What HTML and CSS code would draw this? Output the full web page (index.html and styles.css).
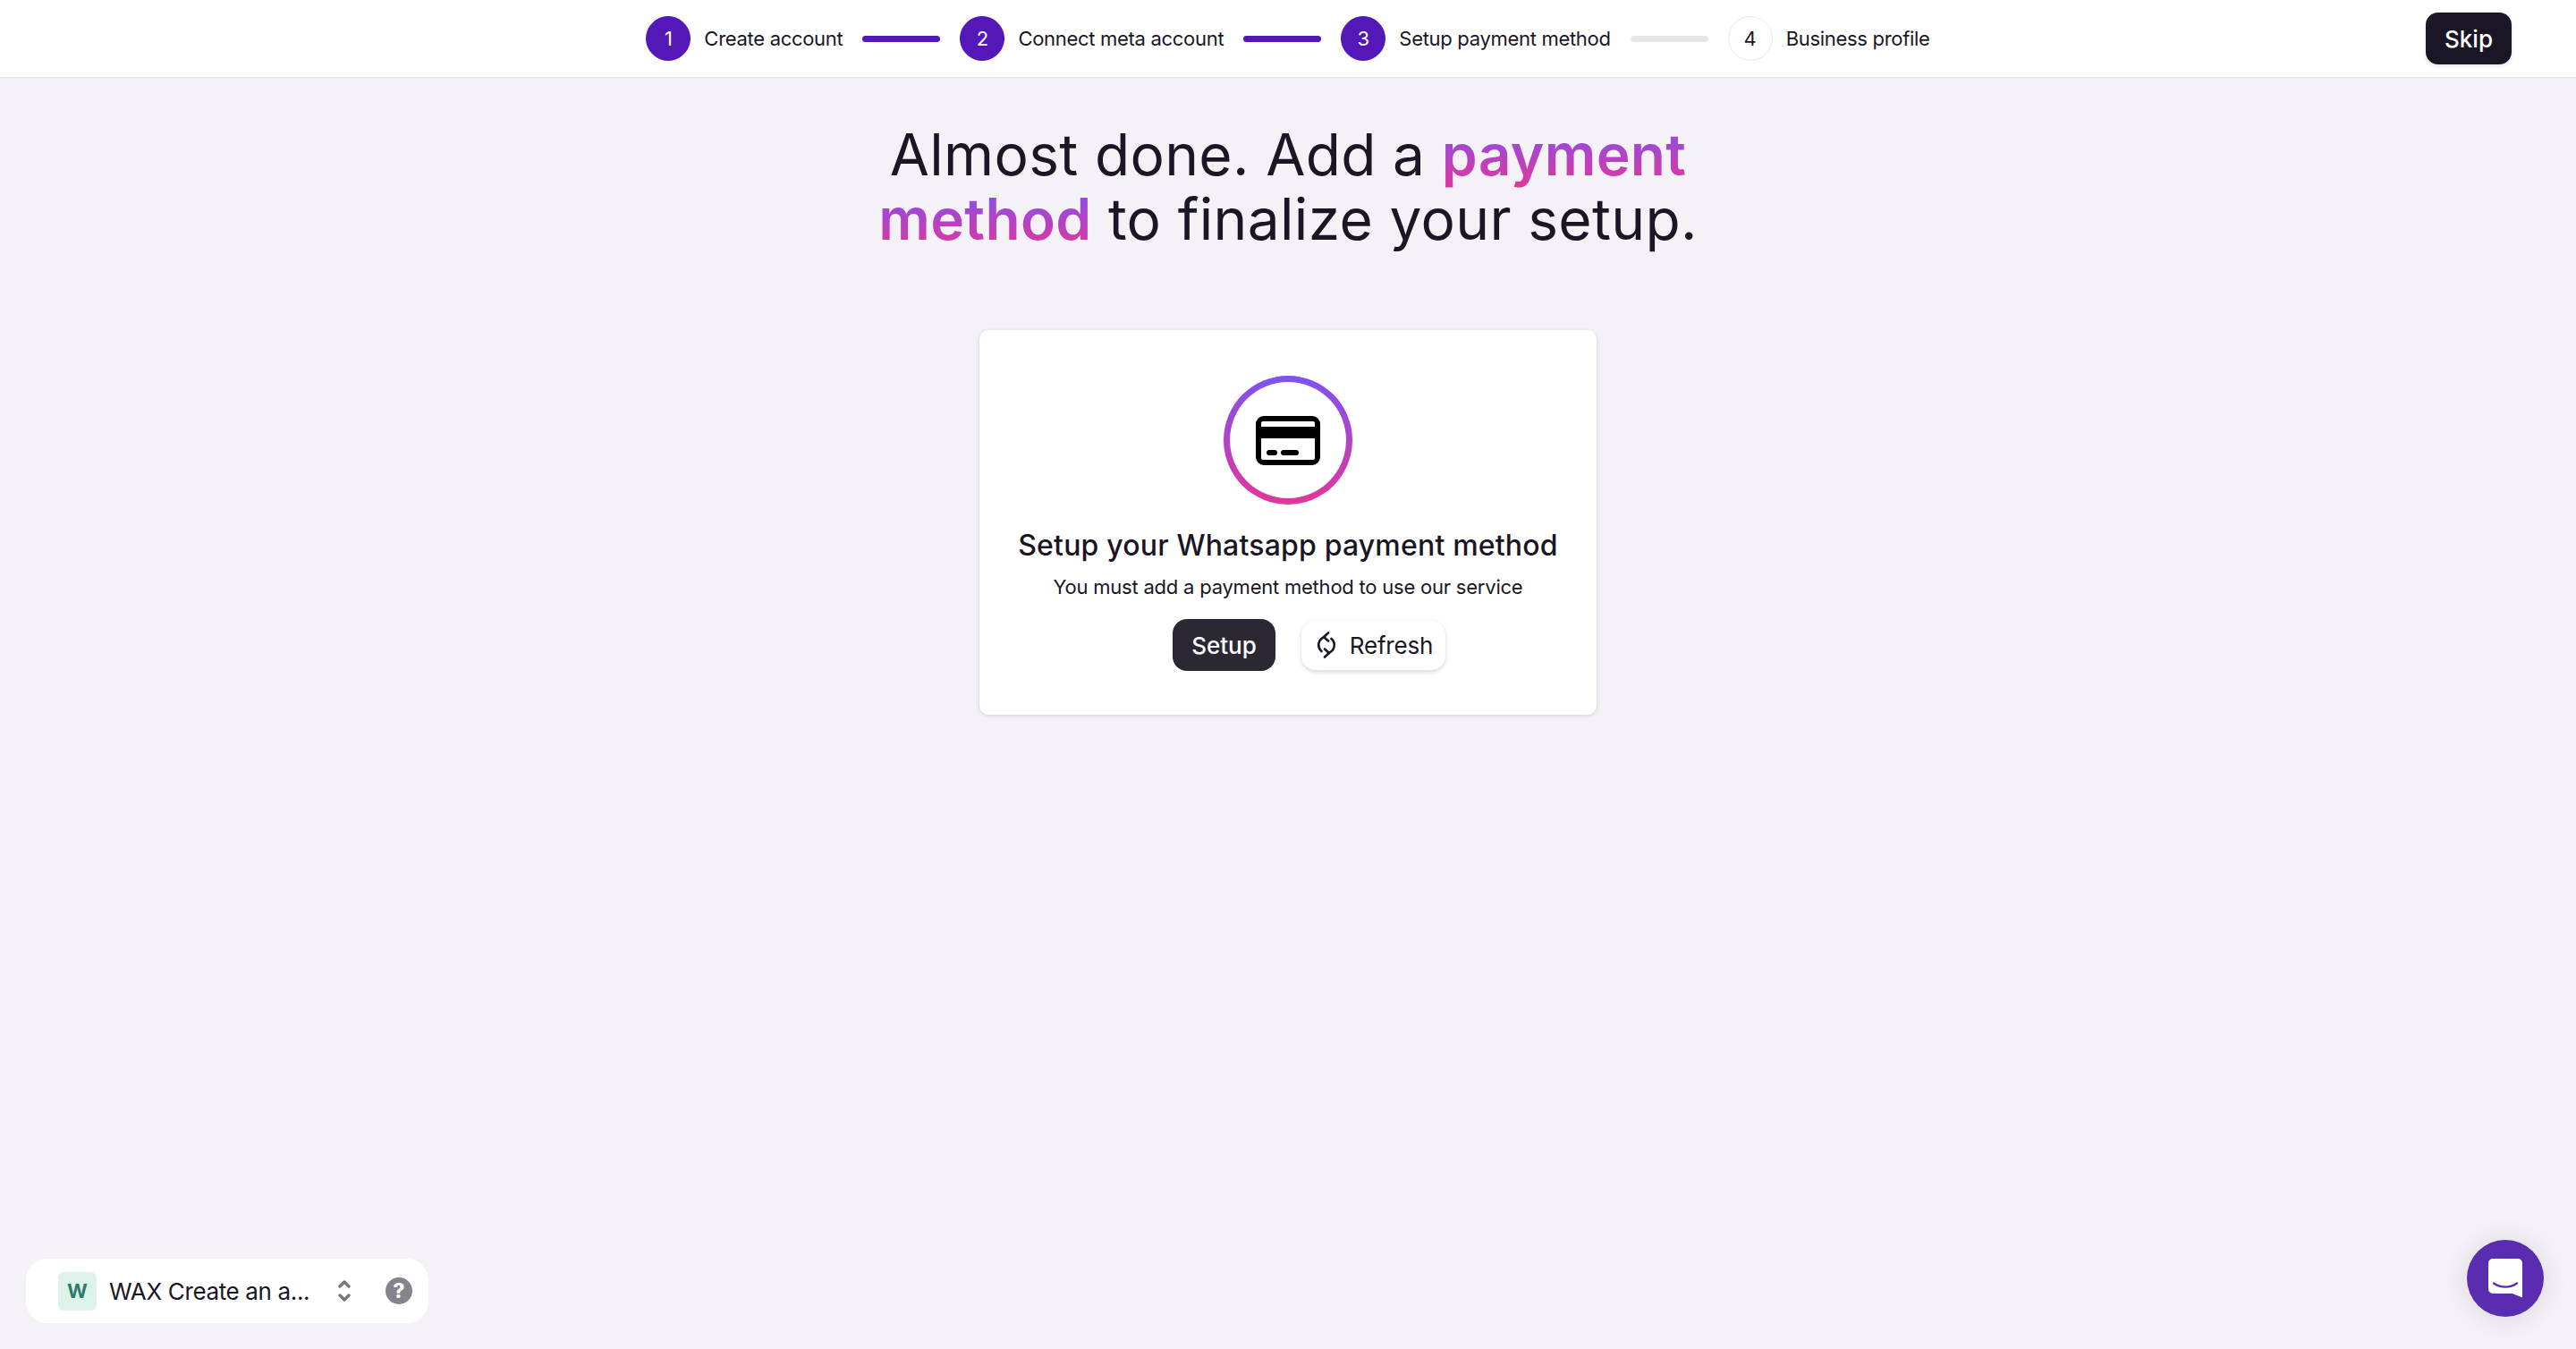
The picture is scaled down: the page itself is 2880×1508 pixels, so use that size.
FILE: index.html
```html
<!DOCTYPE html>
<html lang="en">
<head>
<meta charset="utf-8">
<title>Setup payment method</title>
<link rel="stylesheet" href="styles.css">
</head>
<body>
<header class="topbar">
  <div></div>
  <ol class="steps">
    <li class="step"><span class="dot dot-done">1</span><span class="step-label">Create account</span></li>
    <li class="bar bar-done"></li>
    <li class="step"><span class="dot dot-done">2</span><span class="step-label">Connect meta account</span></li>
    <li class="bar bar-done"></li>
    <li class="step"><span class="dot dot-done">3</span><span class="step-label">Setup payment method</span></li>
    <li class="bar"></li>
    <li class="step"><span class="dot">4</span><span class="step-label">Business profile</span></li>
  </ol>
  <div class="topbar-end"><button class="skip">Skip</button></div>
</header>
<main class="main">
  <h1 class="headline">Almost done. Add a <span class="grad">payment method</span> to finalize your setup.</h1>
  <section class="card">
    <div class="ring">
      <svg class="card-icon" width="72" height="55" viewBox="0 0 72 55" aria-hidden="true">
        <path fill-rule="evenodd" d="M9 0H63a9 9 0 0 1 9 9V46a9 9 0 0 1-9 9H9a9 9 0 0 1-9-9V9a9 9 0 0 1 9-9ZM8 6a2 2 0 0 0-2 2V12H66V8a2 2 0 0 0-2-2ZM6 25V47a2 2 0 0 0 2 2H64a2 2 0 0 0 2-2V25Z"/>
        <rect x="12" y="38" width="12" height="6" rx="3"/>
        <rect x="28" y="38" width="20" height="6" rx="3"/>
      </svg>
    </div>
    <h2 class="card-title">Setup your Whatsapp payment method</h2>
    <p class="card-sub">You must add a payment method to use our service</p>
    <div class="actions">
      <button class="btn-dark">Setup</button>
      <button class="btn-light">
        <svg width="28" height="30" viewBox="0 0 28 30" fill="none" stroke="#1a1625" stroke-width="2.6" stroke-linecap="round" stroke-linejoin="round" aria-hidden="true">
          <path d="M12 6A10 9.5 0 0 0 8.5 22"/>
          <path d="M16 24A10 9.5 0 0 0 19.5 8"/>
          <path d="M16 1.5l-5 4.5 5 4.5"/>
          <path d="M12 19.5l5 4.5-5 4.5"/>
        </svg>
        <span>Refresh</span>
      </button>
    </div>
  </section>
</main>
<div class="workspace">
  <span class="tile">W</span>
  <span class="ws-name">WAX Create an a...</span>
  <svg class="chev" width="14" height="26" viewBox="0 0 14 26" fill="none" stroke="#77757f" stroke-width="3.4" stroke-linecap="round" stroke-linejoin="round" aria-hidden="true">
    <path d="M2 8l5-5 5 5"/>
    <path d="M2 18l5 5 5-5"/>
  </svg>
  <span class="help">?</span>
</div>
<button class="chat" aria-label="Chat">
  <svg width="38" height="44" viewBox="0 0 38 44" aria-hidden="true">
    <path fill="#fff" d="M5 0H33a5 5 0 0 1 5 5V43.5L27 39H5a5 5 0 0 1-5-5V5a5 5 0 0 1 5-5Z"/>
    <path fill="none" stroke="#5a2db0" stroke-width="2.4" stroke-linecap="round" d="M6 27.5C14 33 24 33 32 27.5"/>
  </svg>
</button>
</body>
</html>
```
FILE: styles.css
```css
* { box-sizing: border-box; }
html, body { height: 100%; }
body {
  margin: 0;
  background: #f4f2f6;
  color: #1a1625;
  font-family: Inter, "Liberation Sans", sans-serif;
  overflow: hidden;
}
button { font-family: inherit; border: 0; cursor: pointer; }

.topbar {
  height: 88px;
  background: #fff;
  border-bottom: 2px solid #ebebee;
  display: grid;
  grid-template-columns: 1fr auto 1fr;
  align-items: center;
}
.steps {
  list-style: none;
  margin: 0;
  padding: 0;
  display: flex;
  align-items: center;
  gap: 22px;
}
.step { display: flex; align-items: center; gap: 15px; }
.step-label { font-size: 22px; line-height: 28px; letter-spacing: -.3px; white-space: nowrap; }
.dot {
  width: 50px;
  height: 50px;
  border-radius: 50%;
  border: 1px solid #e9e9ec;
  display: flex;
  align-items: center;
  justify-content: center;
  font-size: 22px;
  background: #fff;
}
.dot-done { background: #5417b8; border-color: #5417b8; color: #fff; }
.bar { width: 87px; height: 7px; border-radius: 4px; background: #e5e6e8; }
.bar-done { background: #5417b8; }
.topbar-end { display: flex; justify-content: flex-end; padding-right: 72px; }
.skip {
  width: 96px;
  height: 58px;
  border-radius: 14px;
  background: #1a1625;
  color: #fff;
  font-size: 26px;
  font-weight: 500;
  box-shadow: 0 2px 4px rgba(26, 22, 37, .12);
}

.main { display: flex; flex-direction: column; align-items: center; }
.headline {
  width: 1000px;
  margin: 49px 0 0;
  font-size: 64px;
  line-height: 72px;
  font-weight: 400;
  letter-spacing: .35px;
  text-align: center;
}
.grad {
  font-weight: 600;
  background: linear-gradient(180deg, #7c52f2, #e5359a);
  -webkit-background-clip: text;
  background-clip: text;
  color: transparent;
}
.card {
  width: 690px;
  height: 430px;
  margin-top: 88px;
  padding-top: 51px;
  background: #fff;
  border-radius: 10px;
  box-shadow: 0 1px 4px rgba(26, 22, 37, .16);
  display: flex;
  flex-direction: column;
  align-items: center;
}
.ring {
  width: 144px;
  height: 144px;
  border-radius: 50%;
  padding: 7px;
  background: linear-gradient(180deg, #7c52f2, #e5359a);
  display: flex;
  align-items: center;
  justify-content: center;
  position: relative;
}
.ring::before {
  content: "";
  position: absolute;
  inset: 7px;
  border-radius: 50%;
  background: #fff;
}
.card-icon { position: relative; }
.card-title {
  margin: 24px 0 0;
  font-size: 32px;
  line-height: 44px;
  font-weight: 500;
  letter-spacing: .18px;
}
.card-sub { margin: 9px 0 0; font-size: 22px; line-height: 30px; letter-spacing: -.22px; }
.actions { margin-top: 21px; padding-left: 47px; display: flex; align-items: center; gap: 29px; }
.btn-dark {
  width: 115px;
  height: 58px;
  border-radius: 16px;
  background: #2b2833;
  color: #fff;
  font-size: 26px;
  font-weight: 500;
}
.btn-light {
  width: 161px;
  height: 55px;
  border-radius: 16px;
  background: #fff;
  color: #1a1625;
  font-size: 26px;
  letter-spacing: -.2px;
  box-shadow: 0 2px 5px rgba(26, 22, 37, .18);
  display: flex;
  align-items: center;
  justify-content: center;
  gap: 12px;
}

.workspace {
  position: fixed;
  left: 29px;
  bottom: 29px;
  width: 450px;
  height: 72px;
  padding-left: 36px;
  background: #fff;
  border-radius: 24px;
  display: flex;
  align-items: center;
}
.tile {
  width: 43px;
  height: 43px;
  border-radius: 6px;
  background: #def2ec;
  color: #2f7a6b;
  font-size: 22px;
  font-weight: 700;
  display: flex;
  align-items: center;
  justify-content: center;
}
.ws-name { margin-left: 14px; width: 256px; font-size: 26px; letter-spacing: -.35px; white-space: nowrap; }
.chev { flex: none; }
.help {
  margin-left: 39px;
  width: 30px;
  height: 30px;
  border-radius: 50%;
  background: #85838c;
  color: #fff;
  font-size: 23px;
  font-weight: 800;
  display: flex;
  align-items: center;
  justify-content: center;
}
.chat {
  position: fixed;
  right: 36px;
  bottom: 36px;
  width: 86px;
  height: 86px;
  border-radius: 50%;
  background: #5a2db0;
  box-shadow: 0 2px 30px rgba(26, 22, 37, .12);
  display: flex;
  align-items: center;
  justify-content: center;
  padding: 0;
}
```
